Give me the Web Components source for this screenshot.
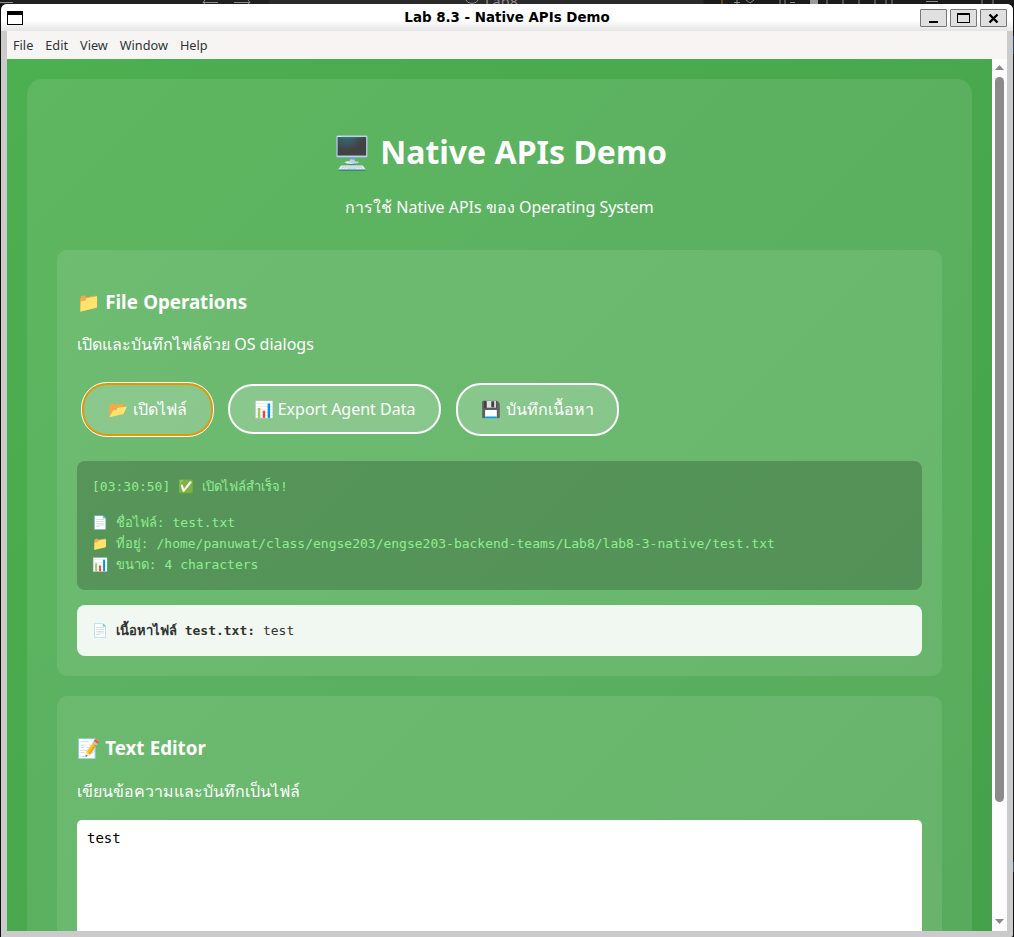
<!DOCTYPE html>
<html lang="en">
<head>
<meta charset="utf-8">
<title>Lab 8.3 - Native APIs Demo</title>
<style>
html,body{margin:0;height:100%;overflow:hidden;background:#1b1b1b}
body{font-family:"Noto Sans",sans-serif}
</style>
</head>
<body>
<desktop-window>
  <title-bar slot="title">Lab 8.3 - Native APIs Demo</title-bar>
  <menu-bar slot="menu"><span>File</span><span>Edit</span><span>View</span><span>Window</span><span>Help</span></menu-bar>
  <demo-page>
    <span slot="heading">🖥️ Native APIs Demo</span>
    <span slot="intro">การใช้ Native APIs ของ Operating System</span>
    <demo-section style="height:426px">
      <span slot="heading">📁 File Operations</span>
      <span slot="note">เปิดและบันทึกไฟล์ด้วย OS dialogs</span>
      <button-row>
        <pill-button focused style="width:131px;height:53px;padding-bottom:2px">📂 เปิดไฟล์</pill-button>
        <pill-button style="width:213px;height:50px;margin-bottom:1px">📊 Export Agent Data</pill-button>
        <pill-button style="width:163px;height:53px;padding-bottom:2px">💾 บันทึกเนื้อหา</pill-button>
      </button-row>
      <log-output>
        <log-line>[03:30:50] ✅ เปิดไฟล์สำเร็จ!</log-line>
        <log-line gap>📄 ชื่อไฟล์: test.txt</log-line>
        <log-line>📁 ที่อยู่: /home/panuwat/class/engse203/engse203-backend-teams/Lab8/lab8-3-native/test.txt</log-line>
        <log-line>📊 ขนาด: 4 characters</log-line>
      </log-output>
      <file-content><b>📄 เนื้อหาไฟล์ test.txt:</b> test</file-content>
    </demo-section>
    <demo-section style="height:400px;--note-top:18px;--note-bottom:13px">
      <span slot="heading">📝 Text Editor</span>
      <span slot="note">เขียนข้อความและบันทึกเป็นไฟล์</span>
      <text-editor>test</text-editor>
    </demo-section>
  </demo-page>
  <scroll-bar slot="scroll"></scroll-bar>
</desktop-window>
<script>
function define(name, html) {
  customElements.define(name, class extends HTMLElement {
    constructor() {
      super();
      this.attachShadow({mode: 'open'}).innerHTML = html;
    }
  });
}

define('desktop-window', `
<style>
:host{display:flex;flex-direction:column;width:1014px;height:937px;overflow:hidden;background:#101010}
.behind{height:4px;flex:none;background:linear-gradient(90deg,#202020 0 269px,#2a2a2a 270px 703px,#1b1b1b 704px);position:relative;overflow:hidden}
.behind span{position:absolute;left:485px;top:-6px;font:14.5px/14px "Noto Sans",sans-serif;color:#8d8d8d}
.behind svg{display:block;position:absolute;left:0;top:0}
.frame{flex:1;min-height:0;width:1006px;margin-left:1px;box-sizing:content-box;display:flex;flex-direction:column;background:#cbcbcb;border-radius:6px 6px 0 0;padding-right:6px;overflow:hidden;border-bottom-right-radius:2px}
.title{margin-right:-6px;height:27px;flex:none}
.inner{margin:0 0 6px 6px;width:1000px;height:900px;display:flex;flex-direction:column}
.view{flex:1;min-height:0;display:flex}
.content{width:985px;overflow:hidden;height:872px}
.row{display:flex;flex:1;min-height:0}
.edge{width:1px;background:linear-gradient(#111 0 32px,#1d3f72 32px 50px,#16191d 50px 92%,#36506a 92% 93%,#111 93%)}
</style>
<div class="behind"><span>Lab8</span>
<svg width="1014" height="4" fill="none" stroke="#8a8a8a"><path d="M0 2.5H13M203 2.5H218M234 2.5H250M205 0l-2 2.5 2 1.5M248 0l2 2.5-2 1.5M466 0q1 3 6 3.500q5-.5 6-3.500M734 2.500h6M737 0v4M746 0l4 3 4-3M780 0v4M785 0v4M790 2.500h5M827 0v4M843 0v4M859 0v4M875 0v4M886 0v4M892 0v4M926 1.500h12M982 0v4M993 0v4"/><path stroke="#a86d32" d="M722 0v4"/><path stroke="none" fill="#999" d="M810 0h8v4h-8z"/></svg></div>
<div class="row"><div class="frame"><div class="title"><slot name="title"></slot></div>
<div class="inner"><slot name="menu"></slot><div class="view"><div class="content"><slot></slot></div><slot name="scroll"></slot></div></div></div><div class="edge"></div></div>`);

define('title-bar', `
<style>
:host{display:flex;align-items:center;height:27px;box-sizing:border-box;background:linear-gradient(#fff 0,#fff 60%,#e4e4e4 100%);padding:0 6px 0 6px;color:#000;font:bold 13.4px/20px "DejaVu Sans",sans-serif}
.t{flex:1;text-align:center;padding-left:74px;padding-top:1px;white-space:nowrap}
svg{display:block;flex:none}
.b{width:27px;height:18px;box-sizing:border-box;border:1px solid #777;background:#e0e0e0;border-radius:1px;margin-left:3px;flex:none}
</style>
<svg width="16" height="14"><path d="M0 0h16v14H0z"/><path fill="#fff" d="M1 4h14v9H1z"/></svg>
<div class="t"><slot></slot></div>
<div class="b"><svg width="25" height="16"><path d="M8 11h9v2H8z"/></svg></div>
<div class="b"><svg width="25" height="16"><path d="M6 3h13v10H6zM7 5v7h11V5z" fill-rule="evenodd"/></svg></div>
<div class="b"><svg width="25" height="16"><path d="M8.500 4.500l8 8m0-8l-8 8" stroke="#000" stroke-width="2.400"/></svg></div>`);

define('menu-bar', `
<style>
:host{display:flex;height:28px;flex:none;box-sizing:border-box;padding:0 6px;gap:12px;align-items:center;background:#f6f5f4;color:#2e3436;font:12.7px/28px "Noto Sans",sans-serif}
</style><slot></slot>`);

define('scroll-bar', `
<style>
:host{display:flex;flex-direction:column;align-items:center;width:15px;height:872px;background:#fcfcfc}
svg{display:block;flex:none}
.thumb{width:9px;height:725px;background:#8b8b8b;border-radius:5px}
.gap{flex:1}
</style>
<svg width="15" height="18"><path fill="#8b8b8b" d="M7.500 6L12 11H3z"/></svg><div class="thumb"></div><div class="gap"></div>
<svg width="15" height="18"><path fill="#8b8b8b" d="M7.500 11L12 6H3z"/></svg>`);

define('demo-page', `
<style>
:host{display:block;box-sizing:border-box;padding:20px;height:1200px;color:#fff;background:linear-gradient(135deg,#4caf50,#45a049) 0 0/100% 1088px}
.box{box-sizing:border-box;height:1160px;padding:51px 30px 30px;border-radius:15px;background:rgba(255,255,255,.1)}
h1{margin:0;height:44px;font:bold 32px/44px "Noto Sans",sans-serif;text-align:center}
p{margin:21px 0 31px;height:24px;font-size:16px;line-height:24px;text-align:center}
</style>
<div class="box"><h1><slot name="heading"></slot></h1><p><slot name="intro"></slot></p><slot></slot></div>`);

define('demo-section', `
<style>
:host{display:block;box-sizing:border-box;margin-bottom:20px;padding:39px 20px 20px;border-radius:10px;background:rgba(255,255,255,.1)}
h3{margin:0;height:26px;font:bold 18.72px/26px "Noto Sans",sans-serif;word-spacing:.4px}
p{margin:var(--note-top,17px) 0 var(--note-bottom,14px);height:28px;font-size:16px;line-height:24px}
</style>
<h3><slot name="heading"></slot></h3><p><slot name="note"></slot></p><slot></slot>`);

define('button-row', `
<style>:host{display:flex;align-items:center;height:53px;margin:23px 0 25px 5px;gap:15px}</style><slot></slot>`);

define('pill-button', `
<style>
:host{display:flex;align-items:center;justify-content:center;flex:none;box-sizing:border-box;border:2px solid #fff;border-radius:25px;background:rgba(255,255,255,.2);font-size:16px;line-height:24px;white-space:nowrap}
:host([focused]){border-color:#e59700;outline:1px solid #fff}
</style><span><slot></slot></span>`);

define('log-output', `
<style>:host{display:block;box-sizing:border-box;height:129px;padding:15px;margin-bottom:15px;border-radius:8px;background:rgba(0,0,0,.2);color:#90ee90;font:13px/21px "DejaVu Sans Mono",monospace}</style><slot></slot>`);

define('log-line', `
<style>:host{display:block;height:21px;white-space:nowrap}:host([gap]){margin-top:15px}</style><slot></slot>`);

define('file-content', `
<style>:host{display:block;box-sizing:border-box;height:51px;padding:15px;border-radius:8px;background:rgba(255,255,255,.9);color:#333;font:13px/21px "DejaVu Sans Mono",monospace;white-space:nowrap}</style><slot></slot>`);

define('text-editor', `
<style>:host{display:block;box-sizing:border-box;height:220px;padding:10px;border-radius:5px;background:#fff;color:#000;font:14px/16px "DejaVu Sans Mono",monospace}</style><slot></slot>`);
</script>
</body>
</html>
